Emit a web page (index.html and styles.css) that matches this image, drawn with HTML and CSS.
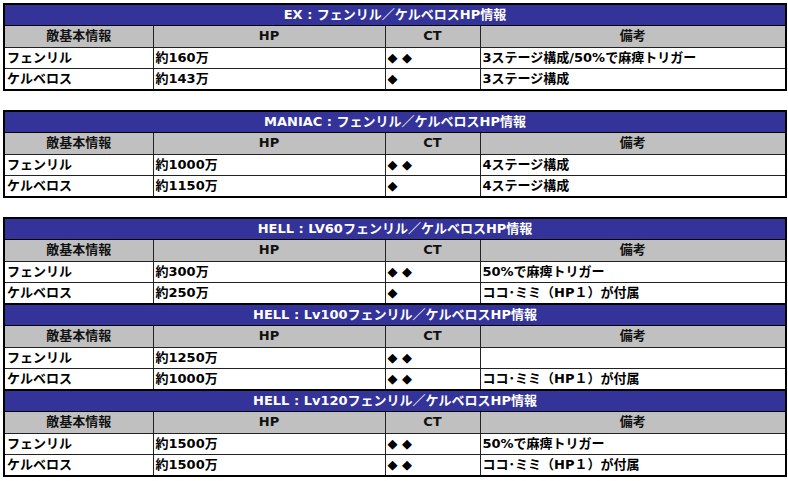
FILE: index.html
```html
<!DOCTYPE html>
<html lang="ja">
<head>
<meta charset="utf-8">
<title>HP情報</title>
<link rel="stylesheet" href="styles.css">
</head>
<body>
<div class="page">
  <table class="hp">
    <colgroup><col class="c1"><col class="c2"><col class="c3"><col class="c4"></colgroup>
    <tr class="title"><td colspan="4">EX : フェンリル／ケルベロスHP情報</td></tr>
    <tr class="head"><td>敵基本情報</td><td>HP</td><td>CT</td><td>備考</td></tr>
    <tr><td>フェンリル</td><td>約160万</td><td>◆ ◆</td><td>3ステージ構成/50%で麻痺トリガー</td></tr>
    <tr><td>ケルベロス</td><td>約143万</td><td>◆</td><td>3ステージ構成</td></tr>
  </table>

  <table class="hp">
    <colgroup><col class="c1"><col class="c2"><col class="c3"><col class="c4"></colgroup>
    <tr class="title"><td colspan="4">MANIAC : フェンリル／ケルベロスHP情報</td></tr>
    <tr class="head"><td>敵基本情報</td><td>HP</td><td>CT</td><td>備考</td></tr>
    <tr><td>フェンリル</td><td>約1000万</td><td>◆ ◆</td><td>4ステージ構成</td></tr>
    <tr><td>ケルベロス</td><td>約1150万</td><td>◆</td><td>4ステージ構成</td></tr>
  </table>

  <table class="hp">
    <colgroup><col class="c1"><col class="c2"><col class="c3"><col class="c4"></colgroup>
    <tr class="title"><td colspan="4">HELL : LV60フェンリル／ケルベロスHP情報</td></tr>
    <tr class="head"><td>敵基本情報</td><td>HP</td><td>CT</td><td>備考</td></tr>
    <tr><td>フェンリル</td><td>約300万</td><td>◆ ◆</td><td>50%で麻痺トリガー</td></tr>
    <tr><td>ケルベロス</td><td>約250万</td><td>◆</td><td>ココ･ミミ（HP１）が付属</td></tr>
    <tr class="title"><td colspan="4">HELL : Lv100フェンリル／ケルベロスHP情報</td></tr>
    <tr class="head"><td>敵基本情報</td><td>HP</td><td>CT</td><td>備考</td></tr>
    <tr><td>フェンリル</td><td>約1250万</td><td>◆ ◆</td><td></td></tr>
    <tr><td>ケルベロス</td><td>約1000万</td><td>◆ ◆</td><td>ココ･ミミ（HP１）が付属</td></tr>
    <tr class="title"><td colspan="4">HELL : Lv120フェンリル／ケルベロスHP情報</td></tr>
    <tr class="head"><td>敵基本情報</td><td>HP</td><td>CT</td><td>備考</td></tr>
    <tr><td>フェンリル</td><td>約1500万</td><td>◆ ◆</td><td>50%で麻痺トリガー</td></tr>
    <tr><td>ケルベロス</td><td>約1500万</td><td>◆ ◆</td><td>ココ･ミミ（HP１）が付属</td></tr>
  </table>
</div>
</body>
</html>
```
FILE: styles.css
```css
html, body {
  margin: 0;
  padding: 0;
  background: #ffffff;
}
.page {
  padding: 3px 0 0 3px;
  display: flex;
  flex-direction: column;
  gap: 19px;
  font-family: "DejaVu Sans", "Noto Sans CJK JP", sans-serif;
  font-size: 13px;
  font-weight: bold;
  color: #000;
}
.hp {
  width: 782px;
  table-layout: fixed;
  border-collapse: collapse;
  border: 2px solid #000;
}
.c1 { width: 149px; }
.c2 { width: 232px; }
.c3 { width: 95px; }
.c4 { width: 306px; }
.hp td {
  height: 21.5px;
  padding: 0 2px;
  border: 1px solid #222;
  line-height: 20px;
  white-space: nowrap;
  overflow: hidden;
  box-sizing: border-box;
}
.hp tr.title td {
  background: #333399;
  color: #fff;
  text-align: center;
  border-top: 2px solid #000;
  border-bottom: 1px solid #000;
}
.hp tr.head td {
  background: #c0c0c0;
  text-align: center;
  color: #111;
}
```
